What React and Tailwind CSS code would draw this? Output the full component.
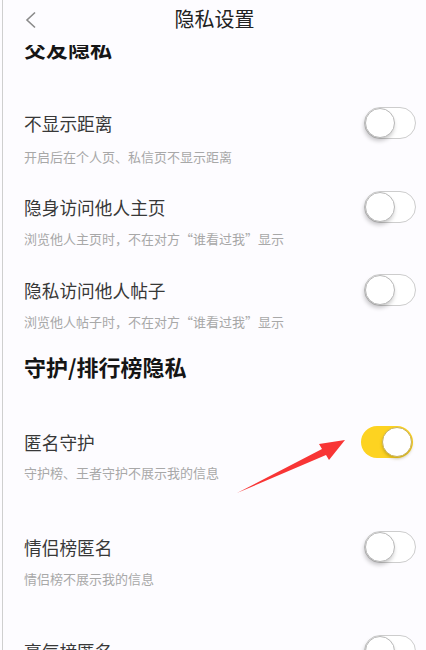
import React from "react";

const font = { fontFamily: '"Noto Sans CJK SC", "Noto Sans", sans-serif' };

function Toggle({ on = false, extraClass = "" }) {
  if (on) {
    return (
      <div className={"relative h-[32px] w-[52px] shrink-0 rounded-full bg-[#fdd321] " + extraClass}>
        <div className="absolute right-[1px] top-[1px] h-[30px] w-[30px] rounded-full border border-[#c9b25a] bg-white shadow-[0_2px_3px_rgba(120,100,0,0.35)]" />
      </div>
    );
  }
  return (
    <div className={"relative h-[32px] w-[52px] shrink-0 rounded-full border border-[#cdcdcd] bg-white " + extraClass}>
      <div className="absolute left-[0px] top-[0px] h-[30px] w-[30px] rounded-full border border-[#b8b8b8] bg-white shadow-[-1px_3px_4px_rgba(0,0,0,0.22)]" />
    </div>
  );
}

function Row({ title, sub, mt, subMt, on, toggleClass }) {
  return (
    <div className={mt}>
      <div className="flex h-[24px] items-center justify-between pr-[10px]">
        <span className="text-[17.7px] leading-[24px] text-[#383838]">{title}</span>
        <Toggle on={on} extraClass={toggleClass} />
      </div>
      {sub && (
        <div className={"h-[16px] text-[13px] leading-[16px] text-[#a8a8a8] " + subMt}>{sub}</div>
      )}
    </div>
  );
}

export default function App() {
  return (
    <div className="relative h-[650px] w-[426px] overflow-hidden bg-[#fdfcff] pl-[2px]" style={font}>
      <div className="flex h-full flex-col border-l border-[#cfcfcf]">
        <div className="relative h-[45px] shrink-0">
          <svg className="absolute left-[20px] top-[11px]" width="16" height="18" viewBox="0 0 16 18">
            <path d="M12 1.5 L4 9 L12 16.5" fill="none" stroke="#8a8a8a" strokeWidth="1.6" />
          </svg>
          <div className="pt-[5px] text-center text-[20px] leading-[28px] text-[#222]">隐私设置</div>
        </div>
        <div className="flex-1 overflow-hidden pl-[21px]">
          <div className="-mt-[13px] text-[22px] font-bold leading-[30px] text-[#151515]">交友隐私</div>
          <Row title="不显示距离" sub="开启后在个人页、私信页不显示距离" mt="mt-[49px]" subMt="mt-[14px]" />
          <Row title="隐身访问他人主页" sub="浏览他人主页时，不在对方“谁看过我”显示" mt="mt-[30px]" subMt="mt-[12px]" />
          <Row title="隐私访问他人帖子" sub="浏览他人帖子时，不在对方“谁看过我”显示" mt="mt-[31px]" subMt="mt-[12px]" />
          <div className="mt-[21px] text-[22px] font-bold leading-[30px] text-[#151515]">守护/排行榜隐私</div>
          <Row title="匿名守护" sub="守护榜、王者守护不展示我的信息" mt="mt-[49px]" subMt="mt-[11px]" on toggleClass="mr-[3px]" />
          <Row title="情侣榜匿名" sub="情侣榜不展示我的信息" mt="mt-[54px]" subMt="mt-[12px]" />
          <Row title="豪气榜匿名" mt="mt-[52px]" />
        </div>
      </div>
      <svg className="absolute left-0 top-0" width="426" height="650" viewBox="0 0 426 650">
        <polygon points="237,493 322,449 319,444 345,440 329,460 326,455" fill="#f83535" />
      </svg>
    </div>
  );
}
